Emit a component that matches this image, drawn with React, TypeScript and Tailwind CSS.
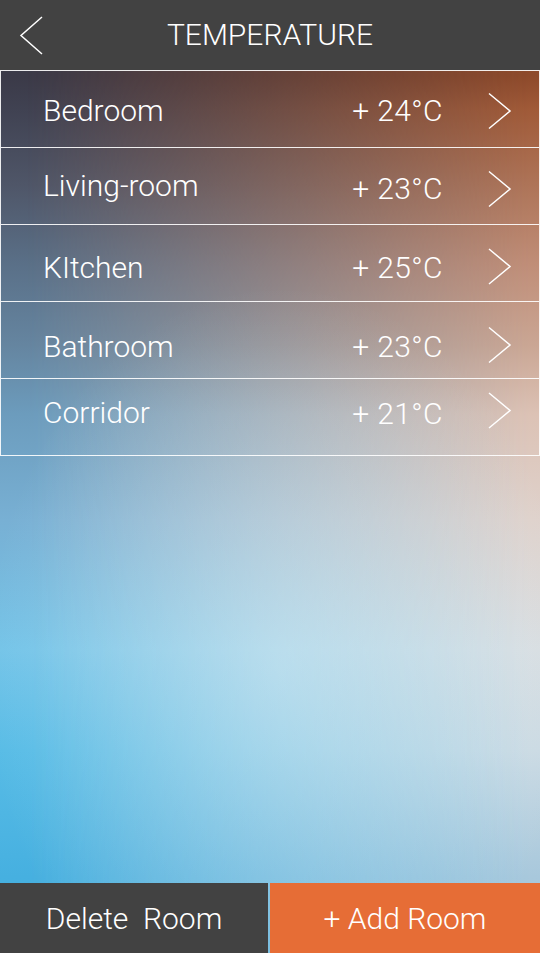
const rooms = [
  { name: 'Bedroom', temp: '+ 24°C', nameY: 'translate-y-[1.5px]', tempY: 'translate-y-[1.5px]', chevY: 'translate-y-[2px]' },
  { name: 'Living-room', temp: '+ 23°C', nameY: 'translate-y-[-0.5px]', tempY: 'translate-y-[3px]', chevY: 'translate-y-[3px]' },
  { name: 'KItchen', temp: '+ 25°C', nameY: 'translate-y-[4.5px]', tempY: 'translate-y-[5px]', chevY: 'translate-y-[3.5px]' },
  { name: 'Bathroom', temp: '+ 23°C', nameY: 'translate-y-[7px]', tempY: 'translate-y-[7px]', chevY: 'translate-y-[5px]' },
  { name: 'Corridor', temp: '+ 21°C', nameY: 'translate-y-[-4px]', tempY: 'translate-y-[-3.5px]', chevY: 'translate-y-[-6.5px]' },
];

const Chevron = ({ className }: { className?: string }) => (
  <svg width="26" height="38" viewBox="0 0 26 38" fill="none" className={`shrink-0 ${className ?? ''}`}>
    <path d="M2 1.5 L23 19 L2 36.5" stroke="white" strokeWidth="1.5" />
  </svg>
);

const App = () => {
  return (
    <div
      className="relative isolate flex flex-col w-[540px] h-[953px] overflow-hidden text-white font-light"
      style={{ fontFamily: 'Roboto, "Liberation Sans", sans-serif' }}
    >
      {/* Blurred backdrop: left edge colours, right edge colours blended across, soft light centre */}
      <div className="absolute inset-0 -z-10 pointer-events-none bg-[linear-gradient(180deg,#3a3a48_0%,#3b3a48_8%,#404252_11.5%,#4f5668_19.4%,#5a7088_27.8%,#6585a0_36.2%,#6c9cbd_43.5%,#78b0d4_54.6%,#74c4e8_68.2%,#58bce6_78.7%,#46b0e0_92%,#44aee0_100%)]">
        <div className="absolute inset-0 bg-[linear-gradient(180deg,#8a4628_0%,#8e4a2b_8%,#a05a38_11.5%,#ae7458_19.4%,#c08e78_27.8%,#caa694_36.2%,#dcc2b5_43.5%,#dfd2cc_54.6%,#d8dee2_68.2%,#cbdae3_78.7%,#a8c8dc_92%,#a2c4da_100%)] [mask-image:linear-gradient(to_right,transparent_5%,black_98%)]" />
        <div className="absolute inset-0 bg-[radial-gradient(ellipse_55%_40%_at_52%_70%,rgba(225,245,252,0.35),rgba(225,245,252,0)_100%)]" />
      </div>

      {/* Header */}
      <header className="relative flex items-center justify-center h-[70px] bg-[#424242] shrink-0">
        <button className="absolute left-[14px] top-[15px] text-white">
          <svg width="32" height="40" viewBox="0 0 32 40" fill="none">
            <path d="M28 2 L7 20.5 L28 39" stroke="white" strokeWidth="1.5" />
          </svg>
        </button>
        <h1 className="text-[30px] leading-none">TEMPERATURE</h1>
      </header>

      {/* Room list */}
      <ul className="border border-white/90 border-b-0">
        {rooms.map((room) => (
          <li
            key={room.name}
            className="flex items-center h-[77px] border-b border-white/90 pl-[42px] pr-[26px]"
          >
            <span className={`flex-1 text-[30px] leading-none ${room.nameY}`}>{room.name}</span>
            <span className={`text-[30px] tracking-[0.4px] leading-none mr-[44px] ${room.tempY}`}>{room.temp}</span>
            <Chevron className={room.chevY} />
          </li>
        ))}
      </ul>

      <div className="flex-1" />

      {/* Footer buttons */}
      <footer className="flex h-[70px] gap-[2px] shrink-0">
        <button className="w-[268px] bg-[#424242] text-[30px] font-light">Delete&nbsp; Room</button>
        <button className="flex-1 bg-[#e66d36] text-[30px] font-light">+ Add Room</button>
      </footer>
    </div>
  );
};

export default App;
